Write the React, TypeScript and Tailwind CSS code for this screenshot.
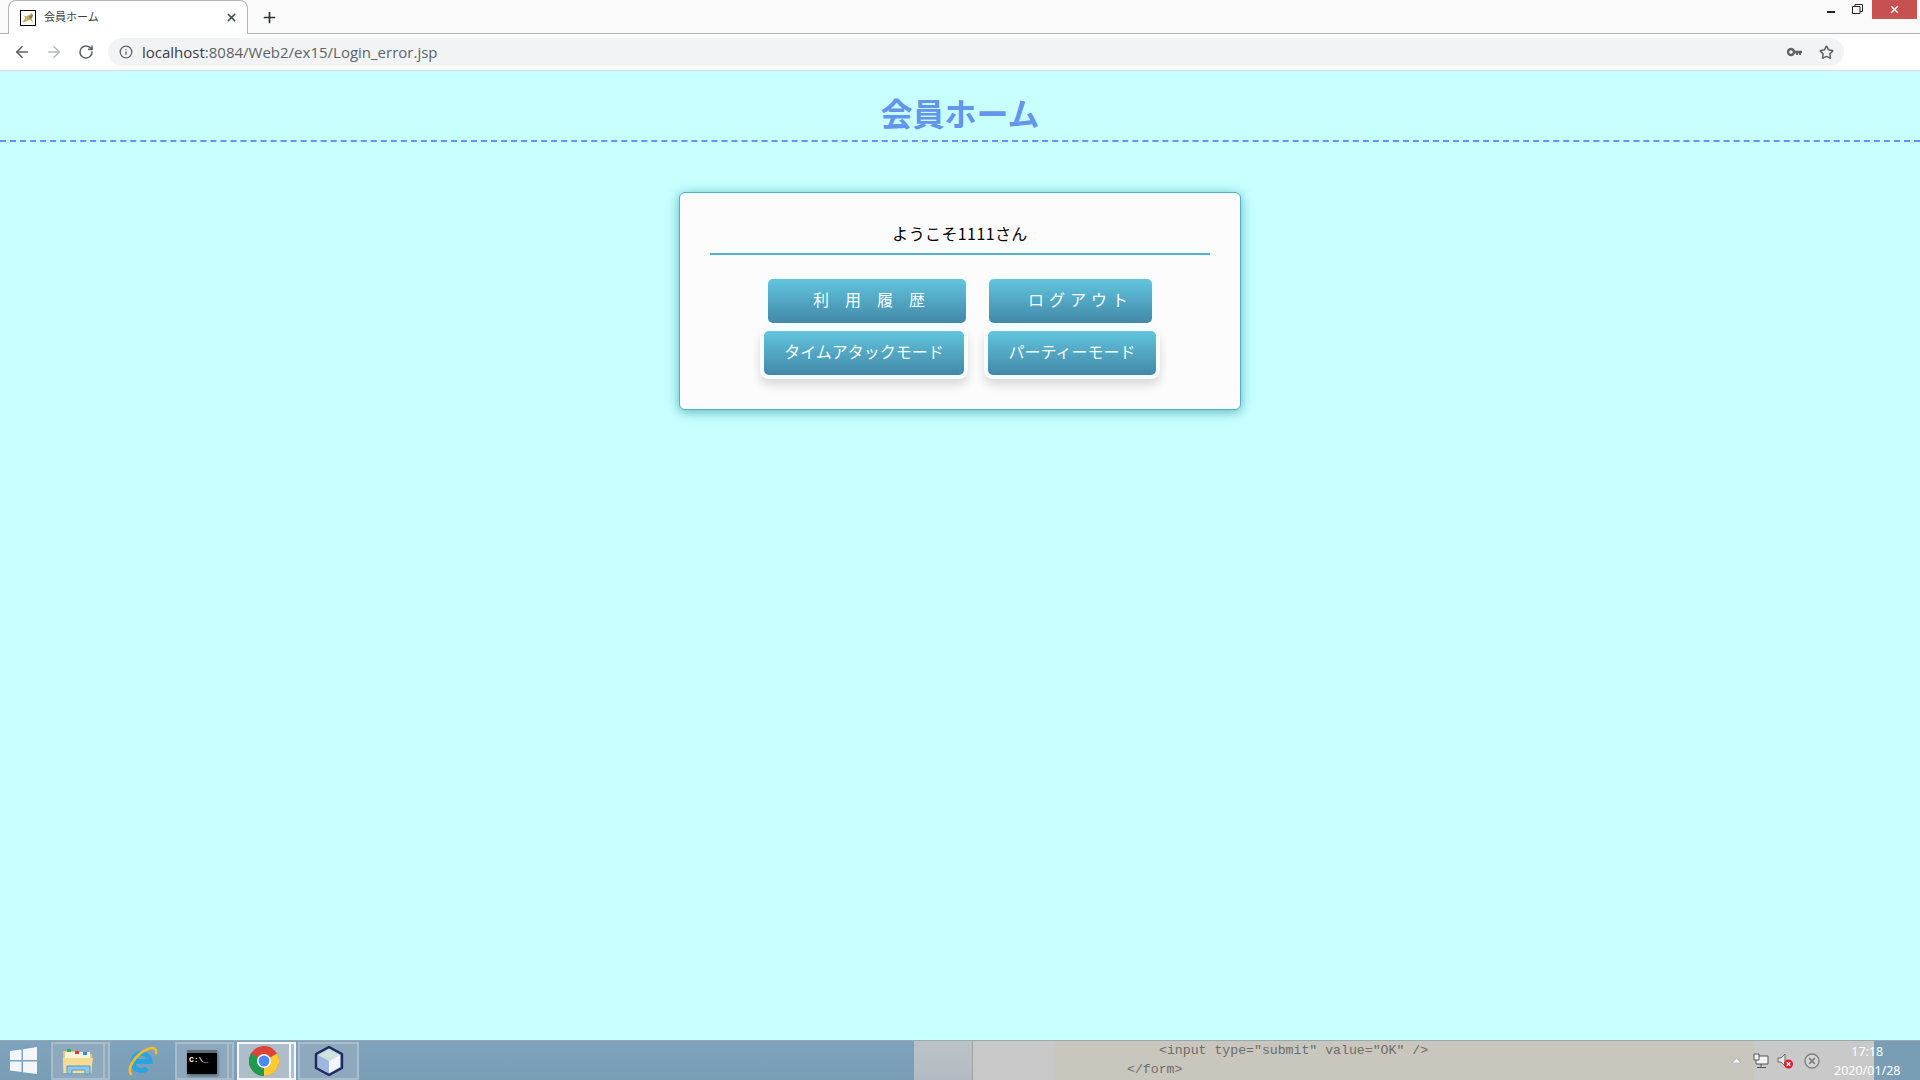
import { ArrowLeft, ArrowRight, Info, Plus, RotateCw, Star, X } from "lucide-react";

const jp = "font-['Liberation_Sans','Noto_Sans_CJK_JP',sans-serif]";

function TomcatIcon() {
  return (
    <svg width="16" height="16" viewBox="0 0 16 16" className="border border-black bg-white">
      <path d="M1 13 L5 8 L3 5 L6 6 L10 4 L12 2 L14 5 L12 8 L14 13 L10 10 L6 12 Z" fill="#c9ae6e" />
      <path d="M9 6 L13 4 L13 8 L10 9 Z" fill="#9a7a3c" />
    </svg>
  );
}

function KeyIcon() {
  return (
    <svg width="16" height="10" viewBox="0 0 16 10">
      <circle cx="4" cy="5" r="3" fill="none" stroke="#5f6368" strokeWidth="2.4" />
      <path d="M7 3.8 H15 V6.2 H14 V8 H12 V6.2 H11 V8 H9 V6.2 H7 Z" fill="#5f6368" />
    </svg>
  );
}

function BrowserChrome() {
  return (
    <div className="shrink-0 bg-white">
      {/* tab strip */}
      <div className="relative flex h-[34px] items-end border-b border-[#b4b4b4] bg-[#fafafa]">
        <div className="relative z-10 ml-[8px] mb-[-1px] flex h-[34px] w-[240px] items-center rounded-t-[8px] border border-b-0 border-[#b4b4b4] bg-white pl-[11px] pr-[9px]">
          <TomcatIcon />
          <span className={`ml-[8px] flex-1 text-[11px] text-[#3c4043] ${jp}`}>会員ホーム</span>
          <X size={13} strokeWidth={3} className="text-[#45494d]" />
        </div>
        <Plus size={17} strokeWidth={2.4} className="mb-[7px] ml-[13px] text-[#303336]" />
        <div className="ml-auto flex h-[33px] items-start self-start">
          <div className="mt-[11px] h-[2px] w-[8px] bg-[#222]" />
          <svg width="11" height="10" viewBox="0 0 11 10" className="ml-[17px] mt-[4px]">
            <path d="M0.5 2.5 H8 V9.5 H0.5 Z M3 2.5 V0.5 H10.5 V7.5 H8" fill="none" stroke="#222" strokeWidth="1" />
          </svg>
          <div className="ml-[9px] mr-[3px] flex h-[19px] w-[45px] items-center justify-center bg-[#c75050]">
            <X size={11} strokeWidth={3.2} className="text-white" />
          </div>
        </div>
      </div>
      {/* toolbar */}
      <div className="flex h-[37px] items-center border-b border-[#dadce0]">
        <ArrowLeft size={18} strokeWidth={2.2} className="ml-[13px] text-[#5f6368]" />
        <ArrowRight size={18} strokeWidth={2.2} className="ml-[14px] text-[#b9bbbe]" />
        <RotateCw size={16} strokeWidth={2.4} className="ml-[15px] text-[#5f6368]" />
        <div className="ml-[14px] flex h-[28px] w-[1736px] items-center rounded-full bg-[#f1f3f4] pl-[11px] pr-[10px]">
          <Info size={14} strokeWidth={2.2} className="text-[#5f6368]" />
          <span className="ml-[9px] flex-1 font-['Open_Sans',sans-serif] text-[15px] text-[#5f6368]">
            <span className="text-[#3a3d41]">localhost</span>:8084/Web2/ex15/Login_error.jsp
          </span>
          <KeyIcon />
          <Star size={15} strokeWidth={2.4} className="ml-[16px] text-[#5f6368]" />
        </div>
      </div>
    </div>
  );
}

function Member({ label, className }: { label: string; className: string }) {
  return (
    <button
      className={`box-border h-[52px] rounded-[9px] border-[4px] border-[#f5fdff] bg-gradient-to-b from-[#62c5de] to-[#4289a8] text-[16px] text-[#f6fdff] ${jp} ${className}`}
    >
      {label}
    </button>
  );
}

function MemberHome() {
  return (
    <main className="flex-1 bg-[#c8ffff]">
      <header className="box-border flex h-[71px] items-center justify-center border-b-2 border-dashed border-[#6495ed] pb-[1px] pt-[19px]">
        <h1 className={`text-[32px] font-bold text-[#6495ed] ${jp}`}>会員ホーム</h1>
      </header>
      <section className="mx-auto mt-[50px] box-border h-[218px] w-[562px] rounded-[6px] border border-[#4fb3c8] bg-[#fcfcfc] px-[30px] pt-[26px] shadow-[0_2px_12px_rgba(0,120,140,0.55)]">
        <p className="border-b-2 border-[#4fb4c8] pb-[5px] text-center font-['Noto_Sans_CJK_JP',sans-serif] text-[16px] leading-[29px] tracking-[0.4px] text-black">
          ようこそ1111さん
        </p>
        <div className="mt-[20px] flex justify-center gap-[15px]">
          <Member label="利　用　履　歴" className="w-[206px] pl-[4px]" />
          <Member label="ログアウト" className="w-[171px] pl-[20px] tracking-[5px]" />
        </div>
        <div className="mt-0 flex justify-center gap-[16px]">
          <Member label="タイムアタックモード" className="w-[208px] shadow-[0_6px_10px_rgba(0,0,0,0.14)]" />
          <Member label="パーティーモード" className="w-[176px] shadow-[0_6px_10px_rgba(0,0,0,0.14)]" />
        </div>
      </section>
    </main>
  );
}

function TaskButton({ children, active, grip = true, wide }: { children: React.ReactNode; active?: boolean; grip?: boolean; wide?: boolean }) {
  const face = active ? "border-[#f4f8fa] bg-[#adbdc9]" : "border-[#a8bccb] bg-[#8ea9bd]";
  return (
    <div className="flex h-full pt-[1px]">
      <div className={`box-border flex h-full items-center justify-center border-2 ${wide ? "w-[61px]" : "w-[54px]"} ${face}`}>{children}</div>
      {grip && <div className={`box-border h-full w-[5px] border-y-2 border-r-2 ${face}`} />}
    </div>
  );
}

function Taskbar() {
  return (
    <footer className="flex h-[40px] shrink-0 border-t border-[#9aa8b2]">
      <div className="flex w-[914px] bg-gradient-to-b from-[#7fa3bd] to-[#7a9db6]">
        <svg width="27" height="27" viewBox="0 0 27 27" className="ml-[10px] mr-[14px] mt-[6px]">
          <path d="M0 4 L11.5 2.4 V13 H0 Z M13 2.2 L27 0 V13 H13 Z M0 14.5 H11.5 V25 L0 23.4 Z M13 14.5 H27 V27 L13 25.2 Z" fill="#f2f6f8" />
        </svg>
        <TaskButton>
          <svg width="32" height="28" viewBox="0 0 32 28">
            <path d="M1 4 H13 L15 7 H30 V26 H1 Z" fill="#e9c874" />
            <path d="M3 5 H28 V11 H3 Z" fill="#f8f2d8" />
            <rect x="5" y="2" width="4" height="3" fill="#2fb14a" />
            <rect x="13" y="4" width="4" height="3" fill="#d8402c" />
            <rect x="21" y="5" width="4" height="3" fill="#2b8fd8" />
            <path d="M1 11 H31 L29 26 H2 Z" fill="#f4dc94" />
            <path d="M5 19 H28 V27 H23 V23 H10 V27 H5 Z" fill="#8ec8ea" stroke="#4f9ac8" strokeWidth="1" />
          </svg>
        </TaskButton>
        <div className="flex w-[65px] items-center justify-center pr-[2px]">
          <svg width="32" height="32" viewBox="0 0 32 32">
            <path d="M8 16.5 H24 A8.5 8.5 0 1 0 21 23.5" fill="none" stroke="#2aa3e0" strokeWidth="5" />
            <path d="M5 29 C1 24 8 10 22 4 C27 2 31 3 30 8" fill="none" stroke="#f5bd27" strokeWidth="2.6" strokeLinecap="round" />
          </svg>
        </div>
        <TaskButton>
          <div className="mt-[1px] h-[24px] w-[30px] border-t-[3px] border-[#5d6d78] bg-black shadow-[1px_2px_3px_rgba(0,0,0,0.4)]">
            <span className="block pl-[2px] pt-[2px] font-['Liberation_Mono',monospace] text-[8px] font-bold leading-[9px] text-white">C:\_</span>
          </div>
        </TaskButton>
        <div className="w-[3px]" />
        <TaskButton active>
          <svg width="30" height="30" viewBox="0 0 30 30">
            <circle cx="15" cy="15" r="15" fill="#db4437" />
            <path d="M15 15 L28 7.5 A15 15 0 0 1 15 30 Z" fill="#fcc934" />
            <path d="M15 15 L15 30 A15 15 0 0 1 2 7.5 Z" fill="#1e9a4f" />
            <circle cx="15" cy="15" r="7" fill="#fff" />
            <circle cx="15" cy="15" r="5.5" fill="#4c8bf5" />
          </svg>
        </TaskButton>
        <div className="w-[2px]" />
        <TaskButton grip={false} wide>
          <svg width="32" height="32" viewBox="0 0 32 32">
            <path d="M16 2 L29 9 V23 L16 30 L3 23 V9 Z" fill="#9db7e0" stroke="#1e2a5c" strokeWidth="2.4" strokeLinejoin="round" />
            <path d="M16 4 L27 10 L16 16 L5 10 Z" fill="#cfe3dd" />
            <path d="M16 16 L27 10 V22 L16 28 Z" fill="#f1f6fb" />
          </svg>
        </TaskButton>
      </div>
      <div className="w-[59px] border-r border-[#9ca3a8] bg-gradient-to-b from-[#bcc3c7] to-[#b3bac2]" />
      <div className="w-[82px] bg-[#c8c8c8]" />
      <div className="box-border w-[699px] bg-[#c9c6bd] font-['Liberation_Mono',monospace] text-[13.2px] leading-[19px] text-[#6d6d6d]">
        <div className="pl-[104px]">{'<input type="submit" value="OK" />'}</div>
        <div className="pl-[72px]">{"</form>"}</div>
      </div>
      {/* tray sits partly on the grey window behind and partly on the blue glass */}
      <div className="flex flex-1 items-center bg-[linear-gradient(90deg,#c9c9c9_120px,#7a9db6_120px)]">
        <svg width="9" height="5" viewBox="0 0 9 5" className="ml-[-22px]">
          <path d="M4.5 0 L9 5 H0 Z" fill="#f4f4f4" stroke="#777" strokeWidth="0.4" />
        </svg>
        <svg width="16" height="16" viewBox="0 0 16 16" className="ml-[12px]">
          <path d="M1 1 H6 V7 H1 Z M6 3 H15 V11 H3 V7 M8 11 V14 M4 14.5 H13" fill="#f2f2f2" stroke="#555" strokeWidth="1" />
        </svg>
        <svg width="16" height="16" viewBox="0 0 16 16" className="ml-[8px]">
          <path d="M1 5 H4 L8 1 V13 L4 9 H1 Z" fill="#e8e8e8" stroke="#666" strokeWidth="1" />
          <circle cx="11.5" cy="11" r="4.5" fill="#d8232a" />
          <path d="M9.8 9.3 L13.2 12.7 M13.2 9.3 L9.8 12.7" stroke="#fff" strokeWidth="1.4" />
        </svg>
        <svg width="16" height="16" viewBox="0 0 16 16" className="ml-[11px]">
          <circle cx="8" cy="8" r="7" fill="#d4d4d4" stroke="#808080" strokeWidth="1.4" />
          <path d="M5.2 5.2 L10.8 10.8 M10.8 5.2 L5.2 10.8" stroke="#808080" strokeWidth="1.8" />
        </svg>
        <div className="ml-[14px] flex flex-col items-center font-['Noto_Sans',sans-serif] text-[12.5px] leading-[19px] text-white">
          <span>17:18</span>
          <span>2020/01/28</span>
        </div>
      </div>
    </footer>
  );
}

export default function App() {
  return (
    <div className="flex h-screen w-full flex-col overflow-hidden">
      <BrowserChrome />
      <MemberHome />
      <Taskbar />
    </div>
  );
}
